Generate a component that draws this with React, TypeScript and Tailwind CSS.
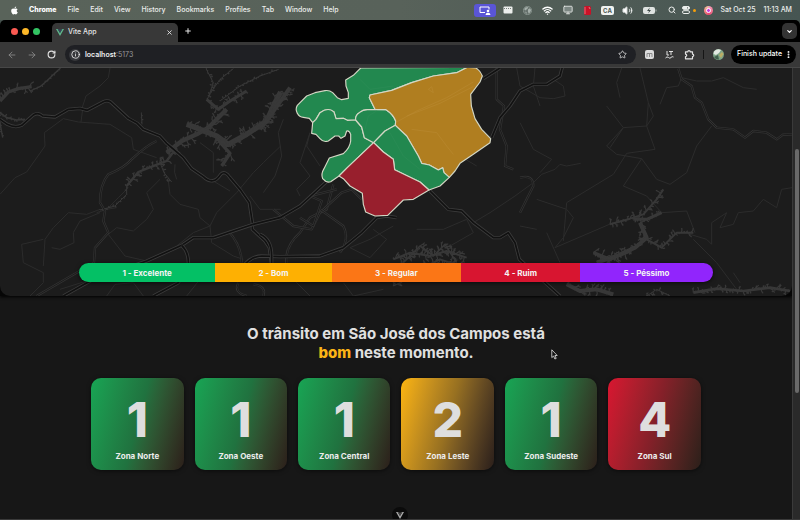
import React from "react";
import {
  ArrowLeft,
  ArrowRight,
  ChevronDown,
  EllipsisVertical,
  Globe,
  Info,
  Monitor,
  Plus,
  Puzzle,
  RotateCw,
  Search,
  Star,
  Volume2,
  Wifi,
  X,
} from "lucide-react";
import { FaApple } from "react-icons/fa";

type Point = [number, number];

const menus = ["File", "Edit", "View", "History", "Bookmarks", "Profiles", "Tab", "Window", "Help"];

const levels = [
  { label: "1 - Excelente", color: "bg-[#04c065]" },
  { label: "2 - Bom", color: "bg-[#feb002]" },
  { label: "3 - Regular", color: "bg-[#fb7616]" },
  { label: "4 - Ruim", color: "bg-[#d81530]" },
  { label: "5 - Péssimo", color: "bg-[#9125fc]" },
];

const green = "from-[#17a554] via-[#20723f]";
const zones = [
  { name: "Zona Norte", level: 1, color: green },
  { name: "Zona Oeste", level: 1, color: green },
  { name: "Zona Central", level: 1, color: green },
  { name: "Zona Leste", level: 2, color: "from-[#fdb50f] via-[#977021]" },
  { name: "Zona Sudeste", level: 1, color: green },
  { name: "Zona Sul", level: 4, color: "from-[#d91530] via-[#842029]" },
];

/* ---------- map ---------- */

// Grows small side arms along a line, which gives a reservoir its ragged shore.
function shore(points: Point[], reach: number, seed: number): string {
  let state = seed;
  const random = () => {
    state = (state * 16807) % 2147483647;
    return state / 2147483647;
  };
  let d = "";
  for (let i = 0; i < points.length - 1; i++) {
    const [x1, y1] = points[i];
    const [x2, y2] = points[i + 1];
    const length = Math.hypot(x2 - x1, y2 - y1);
    const steps = Math.max(1, Math.round(length / 7));
    const angle = Math.atan2(y2 - y1, x2 - x1);
    for (let s = 0; s < steps; s++) {
      const t = s / steps;
      const x = x1 + (x2 - x1) * t;
      const y = y1 + (y2 - y1) * t;
      const side = random() > 0.5 ? 1 : -1;
      const a = angle + side * (0.7 + random());
      const r = reach * (0.2 + random() * 0.8);
      const mx = x + Math.cos(a) * r * 0.6;
      const my = y + Math.sin(a) * r * 0.6;
      const b = a + (random() - 0.5) * 1.6;
      const c = a + (random() - 0.5) * 2.4;
      d += `M${x.toFixed(1)} ${y.toFixed(1)}L${mx.toFixed(1)} ${my.toFixed(1)}`;
      d += `L${(mx + Math.cos(b) * r * 0.5).toFixed(1)} ${(my + Math.sin(b) * r * 0.5).toFixed(1)}`;
      d += `M${mx.toFixed(1)} ${my.toFixed(1)}L${(mx + Math.cos(c) * r * 0.35).toFixed(1)} ${(my + Math.sin(c) * r * 0.35).toFixed(1)}`;
    }
  }
  return d;
}

const line = (points: Point[]) => "M" + points.map((p) => p.join(" ")).join("L");

const lakes: { points: Point[]; reach: number; core: number }[] = [
  { points: [[0, 105], [25, 78], [55, 68], [95, 62]], reach: 22, core: 10 },
  { points: [[90, 75], [120, 62], [140, 45], [182, 5]], reach: 6, core: 4 },
  { points: [[0, 140], [20, 155], [50, 162], [75, 160]], reach: 10, core: 5 },
  { points: [[0, 170], [8, 215]], reach: 6, core: 4 },
  { points: [[300, 432], [345, 420], [380, 385], [380, 360]], reach: 6, core: 3 },
  { points: [[380, 360], [415, 318], [465, 298], [500, 285], [530, 245]], reach: 18, core: 7 },
  { points: [[500, 260], [545, 225], [590, 205], [625, 185], [680, 130]], reach: 26, core: 13 },
  { points: [[560, 175], [600, 190], [650, 210], [685, 235], [740, 205], [800, 165], [825, 110], [842, 78]], reach: 28, core: 16 },
  { points: [[650, 215], [670, 240], [690, 262], [665, 300]], reach: 26, core: 10 },
  { points: [[620, 100], [655, 130], [690, 105], [740, 75]], reach: 17, core: 9 },
  { points: [[618, 8], [640, 50], [625, 95]], reach: 10, core: 3 },
  { points: [[625, 90], [660, 40], [700, 8]], reach: 8, core: 3 },
  { points: [[660, 105], [720, 60], [780, 30], [836, 10]], reach: 7, core: 3 },
  { points: [[480, 290], [492, 320], [515, 348]], reach: 12, core: 3 },
  { points: [[780, 190], [810, 150], [835, 115], [870, 65]], reach: 20, core: 12 },
  { points: [[424, 140], [426, 175]], reach: 5, core: 3 },
  { points: [[1180, 580], [1230, 560], [1290, 570], [1340, 555], [1400, 575]], reach: 24, core: 6 },
  { points: [[1200, 600], [1260, 540], [1300, 570], [1335, 535], [1370, 590]], reach: 18, core: 5 },
  { points: [[1260, 610], [1320, 580], [1380, 600]], reach: 20, core: 6 },
  { points: [[1180, 660], [1240, 630], [1290, 615]], reach: 12, core: 4 },
  { points: [[1830, 475], [1890, 458], [1930, 445], [1970, 400], [1990, 370]], reach: 18, core: 6 },
  { points: [[1900, 460], [1940, 460], [1985, 440]], reach: 16, core: 9 },
  { points: [[1920, 470], [1940, 515], [1905, 545], [1850, 570], [1790, 590]], reach: 24, core: 12 },
  { points: [[1940, 520], [1985, 545], [2030, 500], [2080, 500]], reach: 18, core: 6 },
  { points: [[1780, 560], [1830, 580], [1890, 555]], reach: 22, core: 10 },
  { points: [[1700, 655], [1740, 675], [1790, 670], [1840, 685]], reach: 22, core: 12 },
  { points: [[2080, 680], [2150, 668], [2230, 675], [2310, 665], [2370, 675]], reach: 16, core: 8 },
  { points: [[1940, 690], [1970, 670], [2010, 690]], reach: 12, core: 3 },
];

const highways = [
  "M0 160L22 175Q45 187 65 178L100 147Q115 138 128 150L165 153L205 130L240 127L262 133L310 107Q322 102 332 108L385 157L412 172L430 190L480 210L500 232L550 275L575 308L610 332Q640 360 662 325Q675 312 690 335L720 370L748 410L757 470L757 490L795 525L808 545L815 600L822 640",
  "M190 690L280 640L440 585L545 538L580 515L640 515L760 475L840 455L900 420L985 342",
  "M545 538Q568 560 565 600L535 650L460 690",
  "M730 600Q755 570 785 570L840 572L960 570L1030 545L1085 500L1130 455L1160 450L1190 455",
  "M1290 375L1345 430L1385 435L1420 470L1480 515L1500 515L1525 500L1545 530L1558 580L1680 690",
  "M1475 215L1500 155L1530 120L1560 75L1600 55L1640 55L1680 30L1688 0",
  "M1450 38L1500 6",
  "M780 505Q815 520 815 570L815 610",
];

const roads = [
  "M470 225Q440 238 395 280Q375 305 325 325Q300 355 300 410L315 435L310 465L325 500L285 545L282 590L230 620L110 690",
  "M860 600Q850 545 900 500L930 455L980 430L1000 355",
  "M820 430L880 480L935 490L960 440L1025 380L1055 370L1085 400",
  "M900 455L940 480L965 405L930 390L1010 370",
  "M960 430L1030 480Q1050 520 1020 560",
  "M1490 6L1490 100L1512 120L1500 190L1520 240L1515 300L1540 310",
  "M1560 335Q1600 325 1600 360L1580 400L1560 440",
  "M2035 8L2045 40L2075 60L2085 95L2105 110L2125 160L2150 185L2200 190L2235 215L2260 195L2300 200L2330 220L2350 205L2376 206",
  "M685 495Q725 540 725 590M715 650Q700 680 740 690M760 655Q800 660 790 690",
];

const minor = [
  "M1420 470L1470 440L1545 390L1600 350L1625 325L1665 310L1680 295L1700 300L1742 292",
  "M630 480L650 440L710 380L760 320L790 290L842 240",
  "M0 385L45 335L80 318L135 240L133 200L190 158L235 168L330 175L395 215L400 250L470 275",
  "M245 130L258 90L300 60L325 35L330 6M243 168L248 130",
  "M130 600L135 520L160 485L205 440L260 445L300 430M130 520L65 535L70 590L130 620L130 650L90 690",
  "M480 340L440 380L460 430L440 460L400 495L350 485L325 505L375 570L440 585",
  "M505 345L510 385L540 415L595 430L600 455L630 480L635 530L700 570L730 580",
  "M525 295Q520 320 530 340M600 230L640 260L640 320M640 345L690 375",
  "M750 390L780 430L842 430M630 480L580 500L530 540",
  "M290 440L320 430L350 425M320 430L355 395L385 365M300 440L240 465L220 500L222 530L180 550L155 545",
  "M790 380L825 330L845 270L835 200L850 160",
  "M960 300L920 240L930 200L900 290L930 330L890 370L900 390",
  "M1550 6L1560 60L1620 95L1660 98L1695 90L1690 60L1660 40M1605 6L1600 60L1620 120",
  "M1860 95L1850 50L1865 6M1920 6L1945 110L1940 180M1820 120L1870 185L1940 180L1965 250L1880 262L1840 325L1700 410L1690 525",
  "M1870 185L1820 240L1850 265L1925 278L1970 340L2010 355L2060 320L2090 240L2135 180",
  "M1945 110L1960 150L1940 180M1830 245L1870 185M1925 278L1870 360L1940 390L1985 440L2060 435L2085 500",
  "M1980 115L2000 65L2035 60L2045 35L2090 45L2135 45L2170 35L2230 65L2270 70",
  "M2070 505L2120 520L2135 535L2135 470L2180 440L2160 485L2200 475L2215 440L2260 435L2290 400L2330 425L2345 370L2376 365",
  "M1560 170L1600 250L1655 280L1620 320M1560 480L1610 490M1610 400L1700 430L1720 455L1690 515L1665 545L1840 470M1640 500L1680 590",
  "M1180 480L1110 520L1050 545L1110 575L1160 520L1120 490M1250 490L1330 490L1400 460L1420 500L1350 540",
  "M560 690L600 640M320 690L345 655L400 650L430 690M180 670L260 645M880 640L930 690M1030 650L1060 690L1150 670",
  "M2080 520L2150 590L2210 670M2200 620L2220 650M1380 270L1430 300M1220 6L1300 40",
];

const regions = [
  {
    id: "Norte",
    fill: "#22884f",
    d: "M302 6L280 28L257 42L258 60L265 80L265 97L245 101L232 95L218 80Q208 72 195 74L165 80L140 90L112 118Q105 130 112 142Q118 154 130 154L148 157L158 170L168 160L180 140Q205 122 222 138L228 158L250 157L262 163L287 162Q285 148 298 140Q310 130 325 131L345 130L328 95L330 87L395 73L455 50L520 30L590 20L622 4Z",
  },
  {
    id: "Oeste",
    fill: "#22884f",
    d: "M158 170L168 160L180 140Q205 122 222 138L228 158L250 157L262 163L287 162L305 183L313 215L341 230L262 305L237 330L212 347Q200 352 188 338Q182 325 192 308L208 276L250 263Q270 245 272 225L272 205Q268 193 260 195L255 210L243 217L236 210L225 210L205 225Q190 230 180 218L168 205L155 202Z",
  },
  {
    id: "Central",
    fill: "#22884f",
    d: "M287 162Q285 148 298 140Q310 130 325 131L378 131Q400 145 407 165L406 178L375 195L341 230L313 215L305 183Z",
  },
  {
    id: "Leste",
    fill: "#b07e20",
    d: "M345 130L328 95L330 87L395 73L455 50L520 30L590 20L622 4L648 6Q662 15 667 30L660 48L632 85L634 120L645 158L665 190L692 218L690 230L640 265L600 292L585 315L568 334L552 320L548 305L535 312L508 297L485 292L475 270L440 210L406 178L407 165Q400 145 378 131Z",
  },
  {
    id: "Sudeste",
    fill: "#22884f",
    d: "M341 230L375 195L406 178L440 210L475 270L485 292L508 297L535 312L548 305L552 320L568 334L540 360L507 372L480 348L404 311L400 280L370 258Z",
  },
  {
    id: "Sul",
    fill: "#981f2d",
    d: "M341 230L370 258L400 280L404 311L480 348L507 372L460 400L430 402L383 448L345 450L317 438L310 415L307 382L270 360L250 338L237 330L262 305Z",
  },
];

function CityMap() {
  return (
    <svg
      viewBox="0 6 2376 684"
      preserveAspectRatio="xMidYMid slice"
      className="block h-[228px] w-full"
      fill="none"
      strokeLinejoin="round"
      aria-hidden="true"
    >
      <rect width="2376" height="700" fill="#1c1c1c" />
      {minor.map((d) => (
        <path key={d} d={d} stroke="#2c2c2c" strokeWidth="3" />
      ))}
      {lakes.map((lake, i) => (
        <g key={i} stroke="#383838">
          <path d={line(lake.points)} strokeWidth={lake.core} />
          <path d={shore(lake.points, lake.reach, 97 + i * 131)} strokeWidth="3.5" />
        </g>
      ))}
      {roads.map((d) => (
        <g key={d}>
          <path d={d} stroke="#333333" strokeWidth="7" />
          <path d={d} stroke="#1c1c1c" strokeWidth="3" />
        </g>
      ))}
      {highways.map((d) => (
        <g key={d}>
          <path d={d} stroke="#3b3b3b" strokeWidth="10" />
          <path d={d} stroke="#111111" strokeWidth="5" />
        </g>
      ))}
      <g transform="translate(780 0)">
        {regions.map((r) => (
          <path key={r.id} d={r.d} fill={r.fill} stroke="#d3d6c4" strokeWidth="3.5" />
        ))}
        <g stroke="#bd8c35" strokeWidth="2" opacity="0.7">
          <path d="M410 168L470 135L560 95L640 48M440 150L540 112L640 62M455 190L530 200L560 240L580 265M505 70L515 62L520 80Z" />
        </g>
        <path d="M315 190L325 150L350 135M390 200L430 270L480 310M300 40L330 70L400 60" stroke="#2c8c56" strokeWidth="2" />
      </g>
    </svg>
  );
}

/* ---------- small glyphs ---------- */

function VueMark({ className, outer, inner }: { className: string; outer: string; inner: string }) {
  return (
    <svg viewBox="0 0 24 21" className={className} aria-hidden="true">
      <path d="M0 0h5l7 12 7-12h5L12 21z" fill={outer} />
      <path d="M5 0h4.500l2.500 4.500L14.500 0H19l-7 12z" fill={inner} />
    </svg>
  );
}

function Cell({ children }: { children: React.ReactNode }) {
  return <span className="flex w-5 shrink-0 items-center justify-center">{children}</span>;
}

function MenuBar() {
  return (
    <header className="flex h-5 shrink-0 items-center bg-linear-to-r from-[#59635a] via-[#58625a] to-[#465552] text-[7px] font-medium text-[#eceeec]">
      <FaApple className="ml-[10px] size-[9px] text-white" />
      <nav className="ml-[10px] flex items-center gap-[11px]">
        <button className="font-extrabold text-white">Chrome</button>
        {menus.map((m) => (
          <button key={m}>{m}</button>
        ))}
      </nav>
      <div className="ml-auto flex items-center">
        <span className="mr-[2px] flex h-[13px] w-[22px] items-center justify-center rounded-[3px] bg-[#5a55d6]">
          <svg viewBox="0 0 12 9" className="h-[9px] w-3" fill="none" stroke="white">
            <path d="M6 6.500H1V1h9v2.500" />
            <circle cx="9" cy="5" r="1.300" fill="white" stroke="none" />
            <path d="M6.500 9Q6.500 6.800 9 6.800T11.500 9z" fill="white" stroke="none" />
          </svg>
        </span>
        <Cell>
          <svg viewBox="0 0 10 8" className="h-2 w-[10px]">
            <rect x="0.500" y="0.500" width="9" height="7" rx="1" fill="#eceeec" />
            <path d="M1 2.500h8" stroke="#77807b" strokeDasharray="1 1" />
          </svg>
        </Cell>
        <Cell>
          <svg viewBox="0 0 10 10" className="size-[9px]">
            <circle cx="5" cy="5" r="4.600" fill="#66716c" stroke="#8f9a95" strokeWidth="0.800" />
            <path d="M2 2l3-1 1 1-2 2-1.500 1L1.500 4zM5.500 4l2-1.500 1.500 2L8 7 6.500 8.500 5.500 6.500zM2 6l2 1v2z" fill="#a5afaa" />
          </svg>
        </Cell>
        <Cell><Wifi className="size-[11px] text-white" strokeWidth={3} /></Cell>
        <Cell><Monitor className="size-[10px] fill-[#7c8783]" strokeWidth={2} /></Cell>
        <Cell>
          <svg viewBox="0 0 7 9" className="h-[9px] w-[7px]">
            <rect width="7" height="9" rx="1.500" fill="#c91227" />
            <path d="M1 1v7M5 1l1 2" stroke="#ef8791" strokeWidth="0.800" />
          </svg>
        </Cell>
        <Cell>
          <span className="rounded-[2px] bg-[#f0f2f0] px-[2px] text-[6px] leading-[9px] font-bold text-[#4a5653]">CA</span>
        </Cell>
        <Cell><Volume2 className="size-[11px] fill-white text-[#cfd4d2]" /></Cell>
        <span className="flex w-6 justify-center">
          <svg viewBox="0 0 14 7" className="h-[7px] w-[14px]">
            <rect width="12" height="7" rx="2" fill="#dfe3e1" />
            <path d="M13 2.500v2" stroke="#a5aeab" />
            <path d="M6.800 0.500L4 4h2l-.8 2.500L8 3H6z" fill="#3d4947" />
          </svg>
        </span>
        <Cell><Search className="size-2" strokeWidth={3} /></Cell>
        <span className="flex w-[17px] items-center gap-[2px]">
          <svg viewBox="0 0 9 8" className="h-2 w-[9px]" fill="none" stroke="#eceeec">
            <rect x="0.500" y="0.500" width="7" height="2.800" rx="1.400" fill="#eceeec" />
            <rect x="0.500" y="4.700" width="7" height="2.800" rx="1.400" />
            <path d="M5 1.900h1" stroke="#3f4d4a" />
          </svg>
          <i className="size-[3px] rounded-full bg-[#f59e0b]" />
        </span>
        <i className="mr-2 ml-[5px] size-[9px] rounded-full bg-conic from-[#f5a3c0] via-[#e8486f] to-[#f2c7a0] p-[2px]">
          <i className="block size-[5px] rounded-full border border-white bg-[#c43be0]" />
        </i>
        <time className="mr-2 flex gap-2">
          <span>Sat Oct 25</span>
          <span>11:13 AM</span>
        </time>
      </div>
    </header>
  );
}

function TabStrip() {
  return (
    <div className="flex h-[22px] shrink-0 items-center rounded-t-[5px] bg-black pl-[11px]">
      <div className="flex gap-1">
        <button aria-label="Close" className="size-[7px] rounded-full bg-[#fb5a52]" />
        <button aria-label="Minimize" className="size-[7px] rounded-full bg-[#fcb728]" />
        <button aria-label="Zoom" className="size-[7px] rounded-full bg-[#33c463]" />
      </div>
      <div className="mt-auto ml-[12px] flex h-[19px] w-[126px] items-center rounded-t-[5px] bg-[#383838] pr-[5px] pl-[4px]">
        <VueMark className="h-[7px] w-2" outer="#5fb78b" inner="#35495e" />
        <span className="ml-1 text-[7px] font-medium text-[#e6e6e6]">Vite App</span>
        <button aria-label="Close tab" className="ml-auto text-[#e6e6e6]">
          <X className="size-[7px]" strokeWidth={3} />
        </button>
      </div>
      <button aria-label="New tab" className="ml-[6px] text-[#e6e6e6]">
        <Plus className="size-2" strokeWidth={3} />
      </button>
      <button aria-label="Search tabs" className="mr-[3px] ml-auto flex h-4 w-[15px] items-center justify-center rounded-[5px] bg-[#333333] text-white">
        <ChevronDown className="size-[7px]" strokeWidth={4} />
      </button>
    </div>
  );
}

function Toolbar() {
  return (
    <div className="flex h-[26px] shrink-0 items-center border-b border-[#474747] bg-[#383838] pr-1 pl-[7px]">
      <button aria-label="Back" className="text-[#8b8b8b]"><ArrowLeft className="size-[10px]" /></button>
      <button aria-label="Forward" className="ml-[10px] text-[#8b8b8b]"><ArrowRight className="size-[10px]" /></button>
      <button aria-label="Reload" className="ml-[10px] text-[#e3e3e3]"><RotateCw className="size-[9px]" strokeWidth={3} /></button>
      <form className="ml-[9px] flex h-[19px] flex-1 items-center rounded-full bg-[#1f2024] pr-[9px] pl-[4px]">
        <span className="flex size-3 items-center justify-center rounded-full bg-[#37383c] text-white">
          <Info className="size-[9px]" strokeWidth={2} />
        </span>
        <label className="ml-1 flex flex-1 items-center text-[7px] leading-[12px] font-semibold text-[#f0f0f0]">
          <span>localhost</span>
          <input aria-label="Address" defaultValue=":5173" className="h-3 min-w-0 flex-1 bg-transparent font-normal text-[#9a9a9e] outline-none" />
        </label>
        <button type="button" aria-label="Bookmark" className="text-[#e3e3e3]"><Star className="size-[9px]" /></button>
      </form>
      <button aria-label="Extension M" className="ml-[9px] flex size-[9px] items-center justify-center rounded-[2px] bg-[#dcdcdc]">
        <svg viewBox="0 0 9 9" className="size-[9px]" fill="none" stroke="#8a8a8a"><path d="M2 7V3.500h5V7M4.500 3.500V7" /></svg>
      </button>
      <button aria-label="LanguageTool" className="ml-[11px]">
        <svg viewBox="0 0 9 9" className="size-[9px]" fill="none" stroke="#e3e3e3">
          <path d="M2 1v4h2M4 1.500h4M6 1.500V5M0.500 8Q2 6 3.500 7.500T6 7.500 8.500 7" />
        </svg>
      </button>
      <button aria-label="Extensions" className="ml-[10px] text-[#e3e3e3]">
        <svg viewBox="0 0 11 11" className="size-[11px]" fill="none" stroke="currentColor" strokeWidth="1.200" strokeLinejoin="round">
          <path d="M1.500 2.800h2.300a1.200 1.200 0 0 1 2.400 0h2.300v2.300a1.200 1.200 0 0 1 0 2.400v2.300h-7V7.500a1.200 1.200 0 0 0 0-2.400z" />
        </svg>
      </button>
      <span className="ml-[8px] h-[9px] w-px bg-[#151515]" />
      <button aria-label="Profile" className="ml-[9px]">
        <svg viewBox="0 0 11 11" className="size-[11px]">
          <circle cx="5.500" cy="5.500" r="5.500" fill="#7ea487" />
          <path d="M1 2.500Q4-1 8 1L6 4 3 6 0.500 5z" fill="#e2e9e1" />
          <path d="M6 6l3-3 1.500 2L8 9z" fill="#bcae66" />
          <path d="M1 8l4-2 1 4.500Q3 11 1 8z" fill="#41604c" />
        </svg>
      </button>
      <button className="ml-[7px] flex h-[19px] items-center rounded-full bg-black pr-[3px] pl-[6px] text-[7px] font-medium text-white">
        Finish update
        <EllipsisVertical className="ml-[2px] size-[9px]" strokeWidth={3} />
      </button>
    </div>
  );
}

export default function App() {
  return (
    <div className="flex h-screen flex-col overflow-hidden bg-[#46524e] font-[Inter,'Liberation_Sans',sans-serif]">
      <MenuBar />
      <TabStrip />
      <Toolbar />
      <div className="relative flex min-h-0 flex-1 overflow-hidden border-b border-[#3a3a3a] bg-[#171717]">
        <main className="min-w-0 flex-1 overflow-hidden">
          <section className="relative bg-[#060606] shadow-[0_1px_3px_#000]">
            <div className="overflow-hidden rounded-b-[10px]">
              <CityMap />
            </div>
            <ul className="absolute inset-x-0 bottom-[14px] mx-auto flex h-[19px] w-4/5 overflow-hidden rounded-full text-[8px] font-bold text-[#f4f4f4] shadow-[0_1px_4px_#000a]">
              {levels.map((l) => (
                <li key={l.label} className={`flex flex-auto items-center justify-center ${l.color}`}>
                  {l.label}
                </li>
              ))}
            </ul>
          </section>

          <section className="flex flex-col items-center pt-7">
            <h1 className="w-[320px] text-center text-[15px] leading-[19px] font-bold text-[#e0e0e0]">
              O trânsito em São José dos Campos está{" "}
              <strong className="block font-bold"><em className="font-extrabold text-[#fbb416] not-italic">bom</em> neste momento.</strong>
            </h1>
            <ul className="mt-4 grid w-[77%] grid-cols-6 gap-[11px]">
              {zones.map((z) => (
                <li
                  key={z.name}
                  className={`flex aspect-square flex-col items-center justify-end rounded-[10px] bg-linear-105 to-[#2b1f1a] pb-2 shadow-[0_1px_4px_#0008] ${z.color}`}
                >
                  <span className="text-[48px] leading-[60px] font-extrabold text-[#dedede]">{z.level}</span>
                  <span className="text-[8px] leading-[12px] font-bold text-[#ececec]">{z.name}</span>
                </li>
              ))}
            </ul>
          </section>
        </main>
        <div className="flex w-2 shrink-0 flex-col items-center border-l border-[#3a3a3a] bg-[#2a2a2a]">
          <div className="h-[18%]" />
          <div className="h-[54%] w-1 rounded-full bg-[#6a6a6a]" />
        </div>
        <button
          aria-label="Vue DevTools"
          className="absolute -bottom-1 left-1/2 flex size-4 -translate-x-1/2 items-center justify-center rounded-full bg-[#0b0b0b]"
        >
          <VueMark className="h-[7px] w-2" outer="#a8a8a8" inner="#4a4a4a" />
        </button>
      </div>
      <svg viewBox="0 0 7 11" className="absolute top-[349px] left-[551px] h-[11px] w-[7px]" aria-hidden="true">
        <path d="M0.800 0.800v7.800l1.800-1.600 1.300 3 1.300-.6-1.300-2.900h2.300z" fill="#111" stroke="#e8e8e8" strokeWidth="0.800" />
      </svg>
    </div>
  );
}
